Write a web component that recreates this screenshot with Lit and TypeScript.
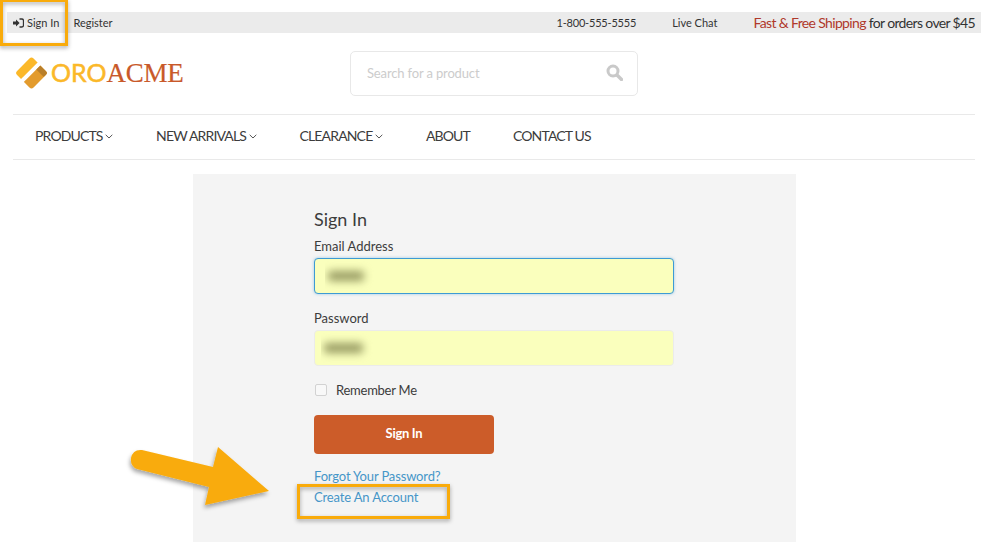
import { LitElement, html, css } from "lit";
import { customElement } from "lit/decorators.js";

const chevron = html`<svg class="chev" viewBox="0 0 8 5" width="8" height="5"><path d="M.7.8 4 4l3.3-3.2" fill="none" stroke="#555" stroke-width="1"/></svg>`;

@customElement("app-root")
export class AppRoot extends LitElement {
  static styles = css`
    :host { display: block; position: relative; width: 984px; height: 550px; overflow: hidden; background: #fff; font-family: Lato, "Open Sans", sans-serif; color: #3c3c3c; }
    .topbar { margin: 12px 3px 0 7px; height: 21px; background: #ebebeb; display: flex; align-items: center; padding: 0 6px 0 6px; font-size: 11px; color: #333; }
    .topbar .in { display: flex; align-items: center; gap: 3px; }
    .topbar .reg { margin-left: 14px; }
    .topbar .phone { margin-left: auto; letter-spacing: -0.2px; }
    .topbar .chat { margin-left: 36px; }
    .topbar .promo { margin-left: 36px; font-size: 14px; color: #333; letter-spacing: -0.65px; }
    .promo b { font-weight: 400; color: #b0392b; }
    .head { display: flex; height: 81px; position: relative; padding-left: 15px; }
    .logo { display: flex; align-items: center; height: 80px; align-self: flex-start; }
    .logo svg { display: block; margin-top: -1px; }
    .word { font-size: 27px; line-height: 1; margin-left: 3px; margin-top: -2px; }
    .oro { color: #fbb829; font-family: Lato, sans-serif; font-size: 25px; -webkit-text-stroke: .5px #fbb829; }
    .acme { color: #c9592a; font-family: "Liberation Serif", serif; letter-spacing: -0.25px; -webkit-text-stroke: .2px #c9592a; }
    .search { position: absolute; left: 350px; top: 18px; width: 288px; height: 45px; box-sizing: border-box; border: 1px solid #e8e8e8; border-radius: 5px; display: flex; align-items: center; padding: 0 14px 2px 16px; justify-content: space-between; color: #ccc; font-size: 13px; letter-spacing: -0.15px; }
    nav { margin: 0 9px 0 13px; height: 46px; box-sizing: border-box; border-top: 1px solid #e9e9e9; border-bottom: 1px solid #e9e9e9; display: flex; align-items: center; padding: 0 0 4px 22px; gap: 43px; font-size: 14px; color: #3c3c3c; }
    nav a { display: flex; align-items: center; gap: 3px; letter-spacing: -0.85px; }
    .chev { margin-left: -0.5px; margin-top: 2px; }
    .panel { margin: 14px 0 0 193px; width: 603px; height: 368px; background: #f4f4f4; box-sizing: border-box; padding: 34px 0 0 121px; }
    h1 { margin: 0; font-size: 18px; font-weight: 400; line-height: 22px; color: #3c3c3c; }
    label { display: block; font-size: 13px; line-height: 16px; color: #3c3c3c; }
    .l1 { margin-top: 8px; }
    .field { width: 360px; height: 36px; box-sizing: border-box; background: #faffbd; border: 1px solid #ebebeb; border-radius: 4px; margin-top: 4px; display: flex; align-items: center; }
    .field.focus { border-color: #3d9bd4; box-shadow: 0 0 3px rgba(61,155,212,.5); padding-left: 13px; }
    .field.pw { padding-left: 9px; }
    .blur { display: block; height: 10px; background: #979b62; filter: blur(4px); border-radius: 3px; clip-path: inset(-10px -10px -10px -3px); }
    .focus .blur { width: 36px; }
    .pw .blur { width: 39px; }
    .l2 { margin-top: 16px; }
    .remember { display: flex; align-items: center; gap: 9px; margin-top: 16px; font-size: 13px; line-height: 16px; letter-spacing: -0.25px; }
    .cb { width: 12px; height: 12px; box-sizing: border-box; border: 1px solid #d2d2d2; border-radius: 2px; background: #f8f8f8; margin: -1px 0 0 1px; }
    button { display: block; margin-top: 17px; width: 180px; height: 39px; border: 0; border-radius: 4px; background: #cc5c29; color: #fff; font: 700 13px Lato, sans-serif; letter-spacing: -0.3px; padding: 0 0 3px; }
    .links { margin-top: 12px; font-size: 13px; line-height: 21px; color: #4696c8; letter-spacing: -0.15px; }
    .box { position: absolute; box-sizing: border-box; border: 3px solid #f9ab0b; filter: drop-shadow(0 2px 2px rgba(0,0,0,.35)); }
    .b1 { left: 0; top: -1px; width: 68px; height: 47px; }
    .b2 { left: 297px; top: 484px; width: 153px; height: 35px; }
    .arrow { position: absolute; left: 125px; top: 440px; overflow: visible; }
  `;
  render() {
    return html`
      <div class="topbar">
        <span class="in"><svg width="11" height="10" viewBox="0 0 11 10"><path d="M0 3.500h3V1.600L6.600 5 3 8.400V6.500H0z" fill="#333"/><path d="M6.500 1h2.200q1.800 0 1.800 1.800v4.400Q10.500 9 8.700 9H6.500" fill="none" stroke="#333" stroke-width="1.300"/></svg>Sign In</span>
        <span class="reg">Register</span>
        <span class="phone">1-800-555-5555</span>
        <span class="chat">Live Chat</span>
        <span class="promo"><b>Fast &amp; Free Shipping</b> for orders over $45</span>
      </div>
      <div class="head">
        <div class="logo">
          <svg width="33" height="34" viewBox="0 0 34 34">
            <defs><clipPath id="d"><rect x="5" y="5" width="24" height="24" rx="3"/></clipPath></defs>
            <g transform="rotate(45 17 17)"><g clip-path="url(#d)">
              <rect x="0" y="0" width="14" height="34" fill="#fbb829"/>
              <rect x="14" y="0" width="4" height="34" fill="#fff"/>
              <rect x="18" y="0" width="16" height="34" fill="#e39b2d"/>
              <path d="M18 5h11v6H18z" fill="#b97f2a"/>
            </g></g>
          </svg>
          <div class="word"><span class="oro">ORO</span><span class="acme">ACME</span></div>
        </div>
        <div class="search"><span>Search for a product</span>
          <svg width="17" height="17" viewBox="0 0 17 17"><circle cx="7" cy="7" r="5" fill="none" stroke="#c9c9c9" stroke-width="3"/><path d="m11 11 4.500 4.500" stroke="#c9c9c9" stroke-width="3.400" stroke-linecap="round"/></svg>
        </div>
      </div>
      <nav>
        <a>PRODUCTS ${chevron}</a><a>NEW ARRIVALS ${chevron}</a><a>CLEARANCE ${chevron}</a><a>ABOUT</a><a>CONTACT US</a>
      </nav>
      <div class="panel">
        <h1>Sign In</h1>
        <label class="l1">Email Address</label>
        <div class="field focus"><i class="blur"></i></div>
        <label class="l2">Password</label>
        <div class="field pw"><i class="blur"></i></div>
        <div class="remember"><span class="cb"></span>Remember Me</div>
        <button>Sign In</button>
        <div class="links"><div>Forgot Your Password?</div><div>Create An Account</div></div>
      </div>
      <div class="box b1"></div>
      <div class="box b2"></div>
      <svg class="arrow" width="150" height="75" viewBox="0 0 150 75">
        <defs><filter id="s" x="-20%" y="-20%" width="140%" height="150%"><feDropShadow dx="-1" dy="3" stdDeviation="2" flood-color="#000" flood-opacity=".35"/></filter></defs>
        <path d="M17 10 L88 27 L93 7 L144 51 L80 65 L84 47 L12 29 Q5 26 6 18 Q8 9 17 10Z" fill="#f9ab0b" filter="url(#s)"/>
      </svg>
    `;
  }
}
